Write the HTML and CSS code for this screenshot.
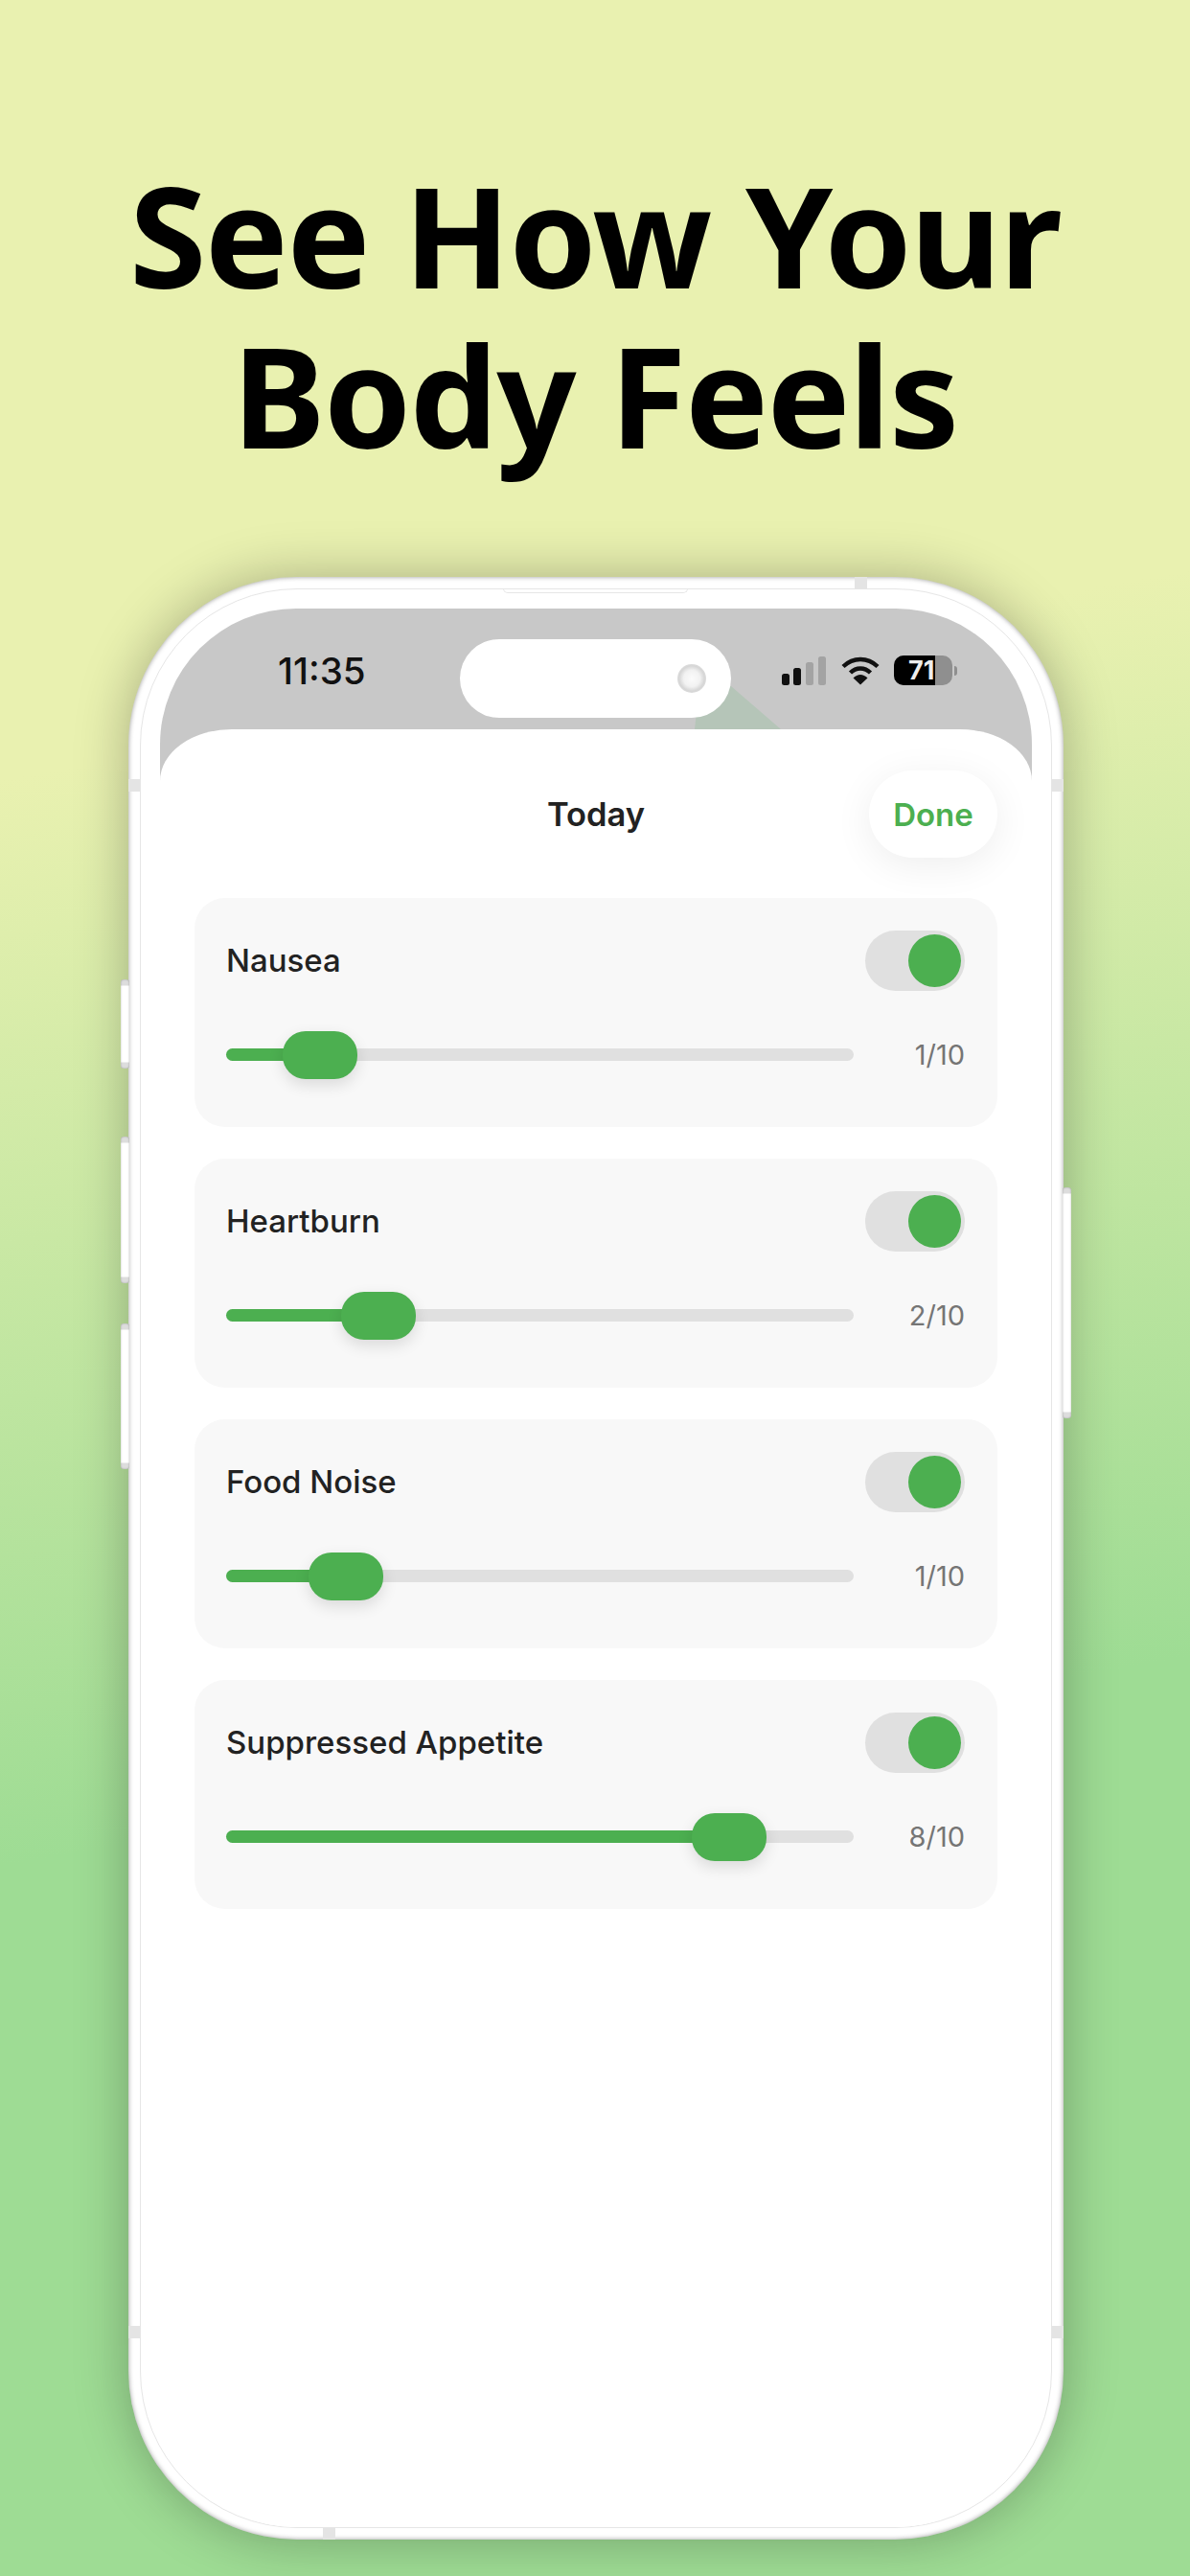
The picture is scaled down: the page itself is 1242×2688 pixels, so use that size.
FILE: index.html
```html
<!DOCTYPE html>
<html lang="en">
<head>
    <meta charset="utf-8">
    <title>See How Your Body Feels</title>
    <link rel="stylesheet" href="styles.css">
</head>
<body>
    <h1 class="headline">See How Your<br>Body Feels</h1>

    <div class="phone">
        <span class="side-btn btn-a"></span>
        <span class="side-btn btn-b"></span>
        <span class="side-btn btn-c"></span>
        <span class="side-btn btn-power"></span>
        <span class="band band-top"></span>
        <span class="band band-left"></span>
        <span class="band band-right"></span>
        <span class="band band-left2"></span>
        <span class="band band-right2"></span>
        <span class="band band-bottom"></span>
        <span class="speaker"></span>

        <div class="rim">
            <div class="screen">
                <!-- status bar -->
                <div class="status">
                    <span class="clock">11:35</span>
                    <div class="island"><span class="camera"></span></div>
                    <span class="glare"></span>
                    <div class="status-icons">
                        <svg class="signal" width="46" height="30" viewBox="0 0 46 30">
                            <rect x="0" y="18" width="8" height="12" rx="2.5" fill="#111"/>
                            <rect x="12" y="12" width="8" height="18" rx="2.5" fill="#111"/>
                            <rect x="25" y="6" width="8" height="24" rx="2.5" fill="#a3a3a3"/>
                            <rect x="38" y="0" width="8" height="30" rx="2.5" fill="#a3a3a3"/>
                        </svg>
                        <svg class="wifi" width="40" height="30" viewBox="0 0 40 30">
                            <path d="M2 10.5C12.5 0.5 27.5 0.5 38 10.5" fill="none" stroke="#111" stroke-width="4.4"/>
                            <path d="M9.5 17C15.5 11 24.5 11 30.5 17" fill="none" stroke="#111" stroke-width="4.4"/>
                            <path d="M12.5 22.5L20 29.5L27.5 22.5C23 17.8 17 17.8 12.5 22.5Z" fill="#111"/>
                        </svg>
                        <div class="battery">
                            <div class="battery-body">
                                <span class="battery-fill"></span>
                                <span class="battery-num">71</span>
                            </div>
                            <span class="battery-cap"></span>
                        </div>
                    </div>
                </div>

                <div class="sheet">
                    <div class="sheet-head">
                        <span class="sheet-title">Today</span>
                        <button class="done">Done</button>
                    </div>

                    <div class="card">
                        <div class="card-top">
                            <span class="card-name">Nausea</span>
                            <span class="toggle"><span class="knob"></span></span>
                        </div>
                        <div class="card-bottom">
                            <div class="track">
                                <div class="fill" style="width: 98px"><span class="thumb"></span></div>
                            </div>
                            <span class="value">1/10</span>
                        </div>
                    </div>

                    <div class="card">
                        <div class="card-top">
                            <span class="card-name">Heartburn</span>
                            <span class="toggle"><span class="knob"></span></span>
                        </div>
                        <div class="card-bottom">
                            <div class="track">
                                <div class="fill" style="width: 159px"><span class="thumb"></span></div>
                            </div>
                            <span class="value">2/10</span>
                        </div>
                    </div>

                    <div class="card">
                        <div class="card-top">
                            <span class="card-name">Food Noise</span>
                            <span class="toggle"><span class="knob"></span></span>
                        </div>
                        <div class="card-bottom">
                            <div class="track">
                                <div class="fill" style="width: 125px"><span class="thumb"></span></div>
                            </div>
                            <span class="value">1/10</span>
                        </div>
                    </div>

                    <div class="card">
                        <div class="card-top">
                            <span class="card-name">Suppressed Appetite</span>
                            <span class="toggle"><span class="knob"></span></span>
                        </div>
                        <div class="card-bottom">
                            <div class="track">
                                <div class="fill" style="width: 525px"><span class="thumb"></span></div>
                            </div>
                            <span class="value">8/10</span>
                        </div>
                    </div>
                </div>
            </div>
        </div>
    </div>
</body>
</html>
```

FILE: styles.css
```css
* {
    box-sizing: border-box;
}
html, body {
    margin: 0;
    padding: 0;
}
body {
    width: 1242px;
    height: 2688px;
    overflow: hidden;
    font-family: 'Inter', 'Liberation Sans', sans-serif;
    background: linear-gradient(170deg, #e9f1b0 0%, #e9f1b0 28%, #9edc94 67%, #9edc94 100%);
}

/* headline */
.headline {
    margin: 0;
    height: 602px;
    padding-top: 161px;
    text-align: center;
    font-family: 'Noto Sans', sans-serif;
    font-weight: 700;
    font-size: 146px;
    line-height: 167px;
    letter-spacing: -1.6px;
    color: #000;
}

/* phone frame */
.phone {
    position: relative;
    width: 976px;
    height: 2048px;
    margin-left: 134px;
    padding: 12px;
    background: #fff;
    border-radius: 176px;
    box-shadow: 0 0 55px rgba(0, 0, 0, 0.28), inset 0 0 5px rgba(0, 0, 0, 0.4);
}
.rim {
    height: 100%;
    padding: 20px 20px 0;
    background: #fff;
    border: 1px solid #e6e6e6;
    border-radius: 164px;
}
.side-btn {
    position: absolute;
    width: 9px;
    background: linear-gradient(180deg, #ddd 0, #ddd 6px, #fff 7px, #fff calc(100% - 7px), #ddd calc(100% - 6px), #ddd 100%);
    border-radius: 3px;
    box-shadow: inset 0 0 2px rgba(0, 0, 0, 0.3);
}
.btn-a { left: -8px; top: 420px; height: 93px; }
.btn-b { left: -8px; top: 584px; height: 153px; }
.btn-c { left: -8px; top: 779px; height: 152px; }
.btn-power { right: -8px; top: 637px; height: 241px; }
.band {
    position: absolute;
    background: #e4e4e4;
}
.band-top { left: 758px; top: 0; width: 13px; height: 12px; }
.band-left { left: 0; top: 211px; width: 12px; height: 13px; }
.band-right { right: 0; top: 211px; width: 12px; height: 13px; }
.band-left2 { left: 0; top: 1825px; width: 12px; height: 13px; }
.band-right2 { right: 0; top: 1825px; width: 12px; height: 13px; }
.band-bottom { left: 203px; bottom: 0; width: 13px; height: 12px; }
.speaker {
    position: absolute;
    left: 391px;
    top: 12px;
    width: 193px;
    height: 5px;
    border: 1px solid #e6e6e6;
    border-top: none;
    border-radius: 0 0 5px 5px;
}

.screen {
    height: 100%;
    background: linear-gradient(180deg, #c8c8c8 200px, #fff 200px);
    border-radius: 142px;
    overflow: hidden;
    display: flex;
    flex-direction: column;
}

/* status bar */
.status {
    position: relative;
    height: 126px;
    flex-shrink: 0;
    display: flex;
    align-items: flex-start;
    padding-top: 32px;
}
.clock {
    width: 313px;
    padding-left: 123px;
    padding-top: 10px;
    line-height: 46px;
    font-size: 38.5px;
    font-weight: 500;
    color: #111;
}
.island {
    position: relative;
    z-index: 1;
    width: 283px;
    height: 82px;
    background: #fff;
    border-radius: 41px;
}
.camera {
    position: absolute;
    right: 26px;
    top: 26px;
    width: 30px;
    height: 30px;
    border-radius: 50%;
    background: radial-gradient(circle, #fbfbfb 0, #f2f2f2 40%, #d6d6d6 62%, #efefef 100%);
}
.glare {
    position: absolute;
    left: 558px;
    bottom: 0;
    width: 90px;
    height: 45px;
    background: #b5c5b8;
    clip-path: polygon(0 100%, 5px 0, 38px 0, 100% 100%);
}
.status-icons {
    display: flex;
    align-items: center;
    gap: 16px;
    margin-left: 53px;
    padding-top: 17px;
}
.wifi {
    margin-right: -1px;
}
.battery {
    display: flex;
    align-items: center;
    gap: 2px;
}
.battery-body {
    position: relative;
    width: 61px;
    height: 31px;
    background: #8f8f8f;
    border-radius: 10px;
    overflow: hidden;
}
.battery-fill {
    position: absolute;
    left: 0;
    top: 0;
    bottom: 0;
    width: 43px;
    background: #000;
}
.battery-num {
    position: absolute;
    left: 15px;
    top: 0;
    line-height: 31px;
    font-size: 27px;
    font-weight: 700;
    color: #eee;
}
.battery-cap {
    width: 3px;
    height: 10px;
    background: #8f8f8f;
    border-radius: 0 3px 3px 0;
}

/* sheet */
.sheet {
    flex: 1;
    background: #fff;
    border-radius: 75px 75px 0 0 / 54px 54px 0 0;
    padding: 0 36px;
}
.sheet-head {
    position: relative;
    height: 176px;
    padding-top: 85px;
    text-align: center;
}
.sheet-title {
    line-height: 0;
    font-size: 34.5px;
    font-weight: 600;
    color: #222;
}
.done {
    position: absolute;
    right: 0;
    top: 43px;
    width: 134px;
    height: 91px;
    border: none;
    border-radius: 46px;
    background: #fff;
    box-shadow: 0 8px 40px rgba(0, 0, 0, 0.07);
    font-family: inherit;
    font-size: 33px;
    font-weight: 600;
    color: #4caf50;
}
.card {
    height: 239px;
    margin-bottom: 33px;
    padding: 34px 34px 0 33px;
    background: #f8f8f8;
    border-radius: 32px;
}
.card-top {
    height: 63px;
    display: flex;
    align-items: center;
    justify-content: space-between;
}
.card-name {
    padding-bottom: 2px;
    font-size: 33px;
    font-weight: 450;
    color: #222;
}
.toggle {
    width: 104px;
    height: 63px;
    padding: 4px;
    display: flex;
    justify-content: flex-end;
    background: #e0e0e0;
    border-radius: 32px;
}
.knob {
    width: 55px;
    height: 55px;
    border-radius: 50%;
    background: #4caf50;
}
.card-bottom {
    height: 50px;
    margin-top: 41px;
    display: flex;
    align-items: center;
    justify-content: space-between;
}
.track {
    width: 655px;
    height: 13px;
    background: #e0e0e0;
    border-radius: 7px;
}
.fill {
    position: relative;
    height: 100%;
    background: #4caf50;
    border-radius: 7px;
}
.thumb {
    position: absolute;
    right: -39px;
    top: -18px;
    width: 78px;
    height: 50px;
    background: #4caf50;
    border-radius: 24px;
    box-shadow: 0 6px 16px rgba(0, 0, 0, 0.12);
}
.value {
    font-size: 29px;
    color: #757575;
}
```
